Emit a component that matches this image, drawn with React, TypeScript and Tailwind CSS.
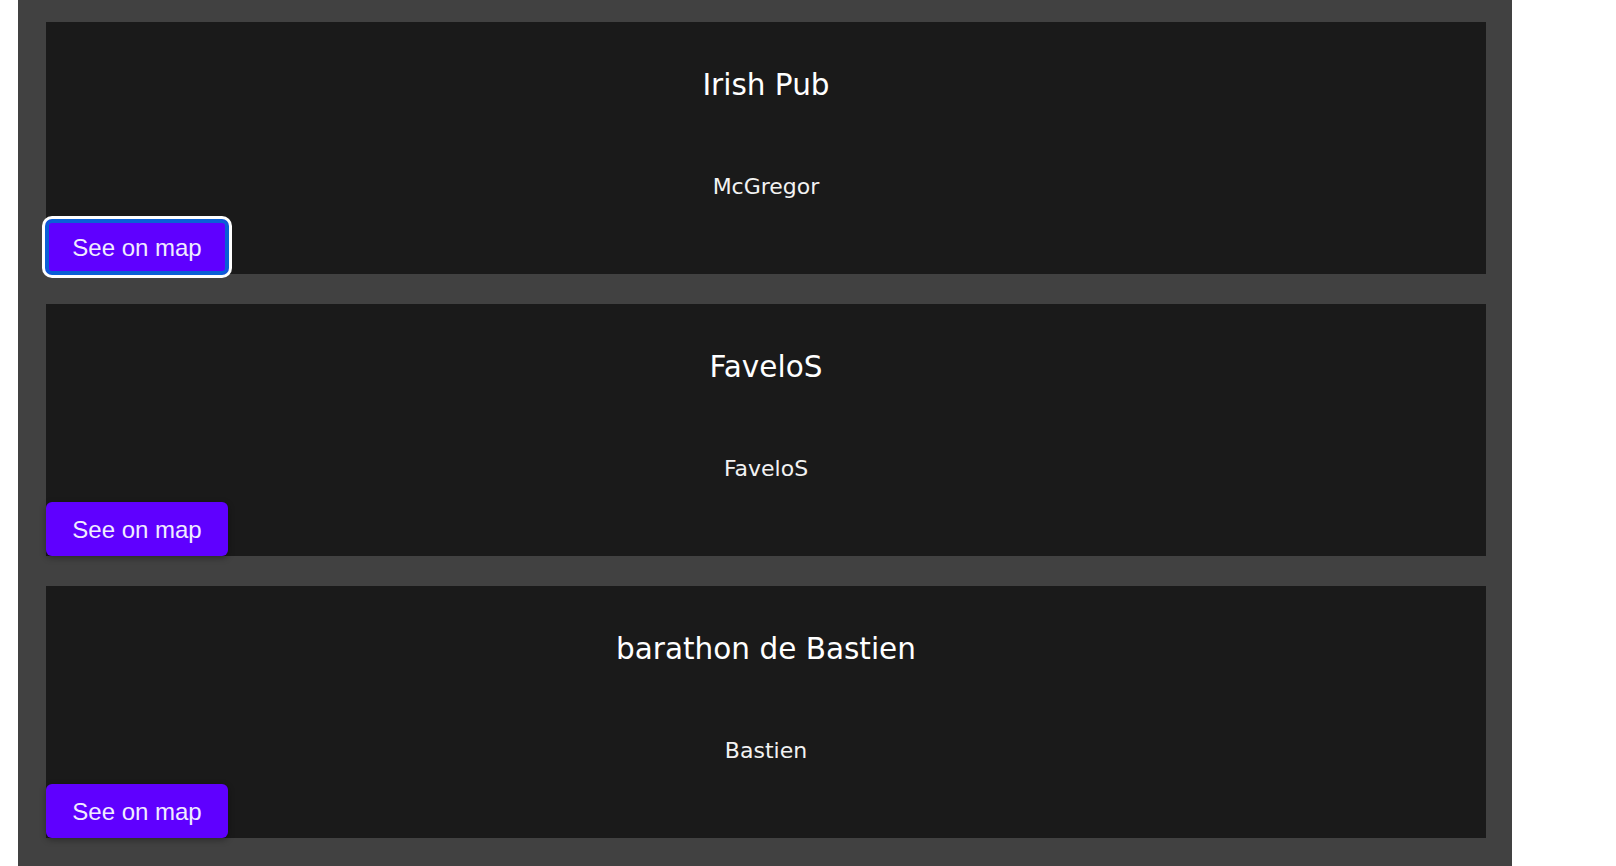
import React from 'react'

const bars = [
  { name: 'Irish Pub', owner: 'McGregor', focused: true },
  { name: 'FaveloS', owner: 'FaveloS', focused: false },
  { name: 'barathon de Bastien', owner: 'Bastien', focused: false },
]

function BarCard({ name, owner, focused }: { name: string; owner: string; focused: boolean }) {
  return (
    <div className="flex h-[252px] w-[1440px] flex-col items-center bg-[#1a1a1a]">
      <h2 className="mt-[45px] text-[29.5px] leading-[36px] font-normal text-white">{name}</h2>
      <p className="mt-[72px] text-[22px] leading-[24px] text-[#f2f2f2]">{owner}</p>
      <button
        className={
          'mt-auto self-start h-[54px] w-[182px] rounded-[6px] bg-[#5f00ff] pt-[2px] text-[24px] text-[#f0ecff] font-["Liberation_Sans",Arial,sans-serif] ' +
          (focused
            ? 'shadow-[inset_0_0_0_3px_#0a5fd6,0_0_0_1px_#0a5fd6,0_0_0_4px_#ffffff]'
            : 'shadow-[0_2px_6px_rgba(0,0,0,0.35)]')
        }
      >
        See on map
      </button>
    </div>
  )
}

export default function App() {
  return (
    <div className="min-h-screen bg-white font-['DejaVu_Sans',sans-serif]">
      <div className="ml-[18px] flex w-[1494px] flex-col gap-[30px] bg-[#414141] pt-[22px] pb-[40px] pl-[28px] pr-[26px]">
        {bars.map((b) => (
          <BarCard key={b.name} {...b} />
        ))}
      </div>
    </div>
  )
}
